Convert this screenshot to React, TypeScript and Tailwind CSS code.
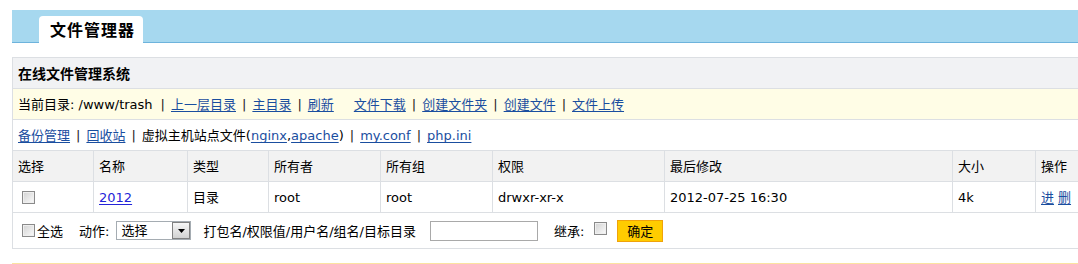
import React from 'react'

const Check = () => (
  <span className="inline-block h-[13px] w-[13px] shrink-0 border border-[#8a8a8a] bg-linear-to-br from-[#d2d2d2] to-[#fbfbfb] shadow-[inset_0_0_0_1px_#efefef]" />
)

const Sep = () => <span className="mx-[6px] text-[#222]">|</span>

const A = ({ children, className = '' }: { children: React.ReactNode; className?: string }) => (
  <a href="#" className={`text-[#1a4e9f] underline underline-offset-2 ${className}`}>
    {children}
  </a>
)

const rowGrid = 'grid grid-cols-[81px_94px_81px_112px_112px_172px_288px_83px_1fr]'
const cell = 'flex items-center border-r border-[#dcdfe3] pl-[5px] pt-[2px]'

export default function App() {
  return (
    <div className="min-h-[264px] bg-white pl-[12px] pt-[10px] font-['DejaVu_Sans','Noto_Sans_CJK_SC',sans-serif] text-[13px] text-black">
      {/* top tab bar */}
      <div className="flex h-[33px] items-end border-b border-[#6db3dc] bg-[#a6d8ef] pl-[27px]">
        <div className="-mb-px flex h-[27px] w-[104px] items-center rounded-t-[4px] bg-white pl-[11px] pt-[2px] text-[16px] font-bold tracking-[1px]">
          文件管理器
        </div>
      </div>

      {/* panel */}
      <div className="mt-[14px] border-l border-t border-[#dcdfe3]">
        <div className="flex h-[31px] items-center border-b border-[#dcdfe3] bg-[#f1f2f4] pl-[5px] pt-[3px] text-[14px] font-bold">
          在线文件管理系统
        </div>

        <div className="flex h-[31px] items-center border-b border-[#dcdfe3] bg-[#fffde6] pl-[5px] pt-[2px]">
          <span className="mr-[2px]">当前目录: /www/trash</span>
          <Sep />
          <A>上一层目录</A>
          <Sep />
          <A>主目录</A>
          <Sep />
          <A>刷新</A>
          <A className="ml-[20px]">文件下载</A>
          <Sep />
          <A>创建文件夹</A>
          <Sep />
          <A>创建文件</A>
          <Sep />
          <A>文件上传</A>
        </div>

        <div className="flex h-[31px] items-center border-b border-[#dcdfe3] pl-[5px] pt-[2px]">
          <A>备份管理</A>
          <Sep />
          <A>回收站</A>
          <Sep />
          <span>虚拟主机站点文件(</span>
          <A>nginx</A>
          <span>,</span>
          <A>apache</A>
          <span>)</span>
          <Sep />
          <A>my.conf</A>
          <Sep />
          <A>php.ini</A>
        </div>

        {/* table header */}
        <div className={`${rowGrid} h-[31px] border-b border-[#dcdfe3] bg-[#f2f2f2]`}>
          <div className={cell}>选择</div>
          <div className={cell}>名称</div>
          <div className={cell}>类型</div>
          <div className={cell}>所有者</div>
          <div className={cell}>所有组</div>
          <div className={cell}>权限</div>
          <div className={cell}>最后修改</div>
          <div className={cell}>大小</div>
          <div className="flex items-center pl-[5px] pt-[2px]">操作</div>
        </div>

        {/* data row */}
        <div className={`${rowGrid} h-[31px] border-b border-[#dcdfe3]`}>
          <div className="flex items-center border-r border-[#dcdfe3] pl-[9px]">
            <Check />
          </div>
          <div className={cell}>
            <a href="#" className="text-[#2424d8] underline underline-offset-2">2012</a>
          </div>
          <div className={cell}>目录</div>
          <div className={cell}>root</div>
          <div className={cell}>root</div>
          <div className={cell}>drwxr-xr-x</div>
          <div className={cell}>2012-07-25 16:30</div>
          <div className={cell}>4k</div>
          <div className="flex items-center gap-[4px] pl-[5px] pt-[2px]">
            <A>进</A>
            <A>删</A>
          </div>
        </div>

        {/* action row */}
        <div className="flex h-[36px] items-center border-b border-[#dcdfe3] pl-[9px]">
          <Check />
          <span className="ml-[2px] pt-[2px]">全选</span>
          <span className="ml-[16px] pt-[2px]">动作:</span>
          <div className="ml-[7px] flex h-[19px] w-[75px] items-stretch border border-[#a5acb2] bg-white">
            <span className="flex flex-1 items-center pl-[4px] pt-[1px]">选择</span>
            <span className="flex w-[18px] items-center justify-center border border-[#808080] bg-linear-to-b from-[#f6f6f6] to-[#d2d2d2]">
              <svg width="7" height="4" viewBox="0 0 7 4">
                <path d="M0 0h7L3.5 4z" fill="#000" />
              </svg>
            </span>
          </div>
          <span className="ml-[12px] pt-[2px]">打包名/权限值/用户名/组名/目标目录</span>
          <input className="ml-[14px] h-[20px] w-[108px] border border-[#a9a9a9] bg-white outline-none" />
          <span className="ml-[16px] pt-[2px]">继承:</span>
          <span className="ml-[10px]">
            <Check />
          </span>
          <button className="ml-[10px] h-[22px] w-[46px] border border-[#f0a30a] bg-[#ffcc00] pt-[1px] text-black">
            确定
          </button>
        </div>
      </div>

      <div className="mt-[14px] h-[10px] border-t border-[#fbe3a1]" />
    </div>
  )
}
